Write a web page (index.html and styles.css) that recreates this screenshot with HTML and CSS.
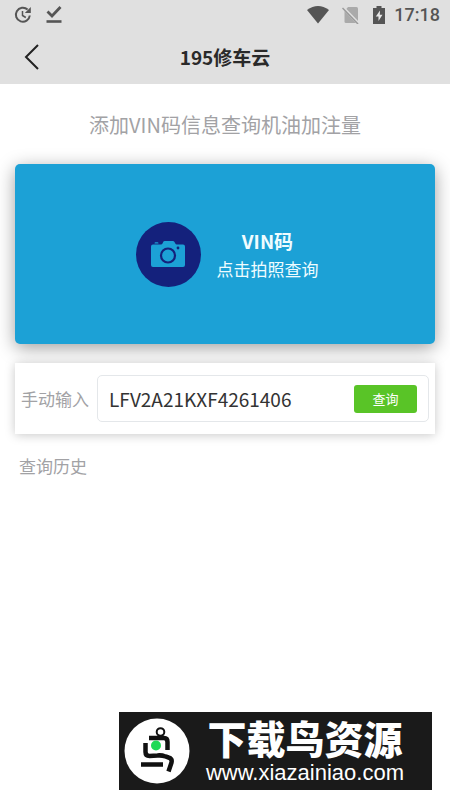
FILE: index.html
```html
<!DOCTYPE html>
<html lang="zh-CN">
<head>
<meta charset="utf-8">
<meta name="viewport" content="width=device-width, initial-scale=1">
<title>195修车云</title>
<link rel="stylesheet" href="styles.css">
</head>
<body>
<header class="header">
  <div class="status">
    <svg class="status-icon" width="18" height="18" viewBox="0 0 18 18" fill="none" stroke="#555" stroke-width="2" aria-hidden="true">
      <path d="M13.600 3.600A7 7 0 1 0 15.800 9.500"/>
      <path d="M8.500 5v4.500l3.300 2" stroke-width="1.500"/>
      <path d="M16.800 1v6h-6z" fill="#555" stroke="none"/>
    </svg>
    <svg class="status-icon" width="18" height="18" viewBox="0 0 18 18" fill="none" stroke="#555" aria-hidden="true">
      <path d="M2.500 5.500l4.500 4.500 8.500-9" stroke-width="2.800"/>
      <path d="M1.500 15.500h15" stroke-width="2.600"/>
    </svg>
    <span class="status-gap"></span>
    <svg width="22" height="18" viewBox="0 0 22 18" aria-hidden="true">
      <path d="M0 4Q11-4 22 4L11 17.500z" fill="#555"/>
    </svg>
    <svg width="18" height="18" viewBox="0 0 18 18" aria-hidden="true">
      <path d="M6 1h8.500q1.500 0 1.500 1.500V17H4q-1.500 0-1.500-1.500V5z" fill="#aaa"/>
      <path d="M1 1.500l15.500 16" stroke="#e0e0e0" stroke-width="3"/>
      <path d="M.500 2l15.500 16" stroke="#999" stroke-width="1.500"/>
    </svg>
    <svg width="12" height="18" viewBox="0 0 12 18" aria-hidden="true">
      <path d="M3.500 0h5v2H12v16H0V2h3.500z" fill="#555"/>
      <path d="M7 4.500L2.800 10.500h2.700V15l4-6.200H6.800z" fill="#e8e8e8"/>
    </svg>
    <time class="clock">17:18</time>
  </div>
  <nav class="nav">
    <button class="back" type="button" aria-label="返回">
      <svg width="16" height="26" viewBox="0 0 16 26" fill="none" stroke="#222" stroke-width="2" aria-hidden="true"><path d="M14 1L2 13l12 12"/></svg>
    </button>
    <h1 class="title">195修车云</h1>
  </nav>
</header>
<main class="main">
  <p class="hint">添加VIN码信息查询机油加注量</p>
  <button class="scan" type="button">
    <span class="camera">
      <svg width="34" height="28" viewBox="0 0 34 28" aria-hidden="true">
        <path d="M2 4.500H10q1 0 1.500-1L12.300 1.800q.4-.8 1.400-.8h8.200q1 0 1.400.8l1 1.700q.5 1 1.500 1H32q2 0 2 2V25q0 2-2 2H2q-2 0-2-2V6.500q0-2 2-2z" fill="#1ca1d6"/>
        <path d="M3.500 3.500q0-1.200 1-1.200h2q1 0 1 1.200z" fill="#1ca1d6"/>
        <circle cx="17" cy="15.500" r="7" fill="none" stroke="#14217c" stroke-width="2.200"/>
        <circle cx="27" cy="8" r="1.400" fill="#14217c"/>
      </svg>
    </span>
    <span class="scan-text"><strong class="scan-title">VIN码</strong><span>点击拍照查询</span></span>
  </button>
  <form class="entry">
    <label class="label" for="vin">手动输入</label>
    <div class="field">
      <input class="vin" id="vin" type="text" value="LFV2A21KXF4261406">
      <button class="query" type="button">查询</button>
    </div>
  </form>
  <h2 class="history">查询历史</h2>
</main>
<footer class="brand">
  <svg class="brand-logo" width="66" height="66" viewBox="0 0 66 66" fill="none" stroke="#111" stroke-width="4.500" aria-hidden="true">
    <circle cx="33" cy="33" r="32.500" fill="#fff" stroke="none"/>
    <circle cx="36.500" cy="14" r="3.800" stroke-width="2"/>
    <path d="M25 20h15q3.500 0 3.500 4v8M21.500 25v9q0 4 4 4l8-.5q4-.500 8 1l3 1q4 1 3 5l-3 9M17 46.500h22"/>
    <circle cx="32" cy="27.500" r="5" fill="#20d957" stroke="none"/>
  </svg>
  <div class="brand-text"><span class="brand-name">下载鸟资源</span><span class="brand-url">www.xiazainiao.com</span></div>
</footer>
</body>
</html>
```
FILE: styles.css
```css
* { box-sizing: border-box; }
body {
  margin: 0;
  min-height: 100vh;
  display: flex;
  flex-direction: column;
  background: #fff;
  color: #333;
  font-family: "Noto Sans CJK SC", sans-serif;
}
button, input { font: inherit; border: 0; padding: 0; }
h1, h2, p { margin: 0; }
.header { background: #e0e0e0; }
.status {
  height: 30px;
  padding: 0 10px 0 14px;
  display: flex;
  align-items: center;
  gap: 13px;
}
.status-gap { flex: 1; }
.clock {
  margin-left: -4px;
  font: 500 18px/32px Roboto, sans-serif;
  color: #555;
}
.nav {
  height: 54px;
  display: grid;
  grid-template-columns: 64px 1fr 64px;
  align-items: center;
}
.back {
  height: 54px;
  display: flex;
  align-items: center;
  justify-content: center;
  background: none;
}
.title {
  font-size: 19px;
  line-height: 54px;
  font-weight: 700;
  text-align: center;
  color: #2a2a2a;
}
.main { padding: 0 15px; }
.hint {
  padding: 26px 0 24px;
  font-size: 20px;
  line-height: 30px;
  text-align: center;
  color: #a2a2a5;
}
.scan {
  width: 100%;
  min-height: 180px;
  padding-left: 4px;
  display: flex;
  align-items: center;
  justify-content: center;
  gap: 16px;
  border-radius: 5px;
  background: #1ca1d6;
  box-shadow: 0 4px 18px rgba(0, 0, 0, .38);
  color: #effcff;
}
.camera {
  width: 65px;
  height: 65px;
  display: flex;
  align-items: center;
  justify-content: center;
  border-radius: 50%;
  background: #14217c;
}
.scan-text {
  display: flex;
  flex-direction: column;
  padding-top: 2px;
  font-size: 17px;
  line-height: 28px;
}
.scan-title { font-size: 19px; }
.entry {
  position: relative;
  margin-top: 19px;
  padding: 12px 6px;
  display: flex;
  align-items: center;
  gap: 8px;
  background: #fff;
  box-shadow: 0 1px 10px rgba(0, 0, 0, .22);
}
.label, .history {
  font-size: 17px;
  line-height: 28px;
  font-weight: 400;
  color: #a2a2a5;
}
.field {
  flex: 1;
  min-width: 0;
  height: 47px;
  padding: 0 11px;
  display: flex;
  align-items: center;
  border: 1px solid #e4e7ea;
  border-radius: 5px;
}
.vin {
  flex: 1;
  min-width: 0;
  font-size: 19px;
  line-height: 28px;
  color: #333;
  background: none;
}
.query {
  width: 63px;
  height: 28px;
  border-radius: 3px;
  background: #59c427;
  color: #fff;
  font-size: 13px;
  line-height: 28px;
}
.history { padding: 18px 4px; }
.brand {
  margin: auto 18px 10px auto;
  padding: 5px 28px 5px 5px;
  display: flex;
  align-items: center;
  gap: 16px;
  background: #1a1a1a;
  color: #fff;
}
.brand-text {
  display: flex;
  flex-direction: column;
  align-items: center;
}
.brand-name {
  font-size: 39px;
  line-height: 40px;
  font-weight: 900;
}
.brand-url {
  padding-top: 4px;
  font: 22px/24px "Liberation Sans", Arial, sans-serif;
}
```
